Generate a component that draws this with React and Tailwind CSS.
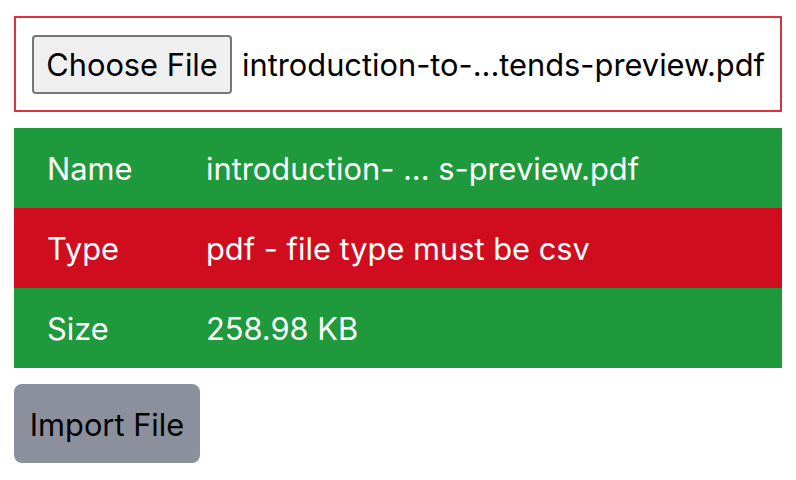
export default function App() {
  const rows = [
    { label: 'Name', value: 'introduction- ... s-preview.pdf', bad: false },
    { label: 'Type', value: 'pdf - file type must be csv', bad: true },
    { label: 'Size', value: '258.98 KB', bad: false },
  ];

  return (
    <div className="px-[14px] pt-[16px] font-['Inter',sans-serif] text-[30.8px] text-black">
      <div className="flex h-[96px] items-center border-2 border-[#dc3240] pl-[16px]">
        <span className="flex h-[59px] w-[200px] items-center justify-center rounded-[4px] border-2 border-[#767676] bg-[#efefef] pt-[2px]">
          Choose File
        </span>
        <span className="ml-[10px] whitespace-nowrap pt-[2px]">introduction-to-...tends-preview.pdf</span>
      </div>

      <div className="mt-[16px]">
        {rows.map(row => (
          <div
            key={row.label}
            className={`flex h-[80px] items-center pt-[3px] text-white ${row.bad ? 'bg-[#d00d1f]' : 'bg-[#1e9a3c]'}`}
          >
            <span className="w-[192px] pl-[33px]">{row.label}</span>
            <span>{row.value}</span>
          </div>
        ))}
      </div>

      <button className="mt-[16px] h-[79px] w-[186px] rounded-[8px] bg-[#8b909c] pt-[3px] text-black">
        Import File
      </button>
    </div>
  );
}
